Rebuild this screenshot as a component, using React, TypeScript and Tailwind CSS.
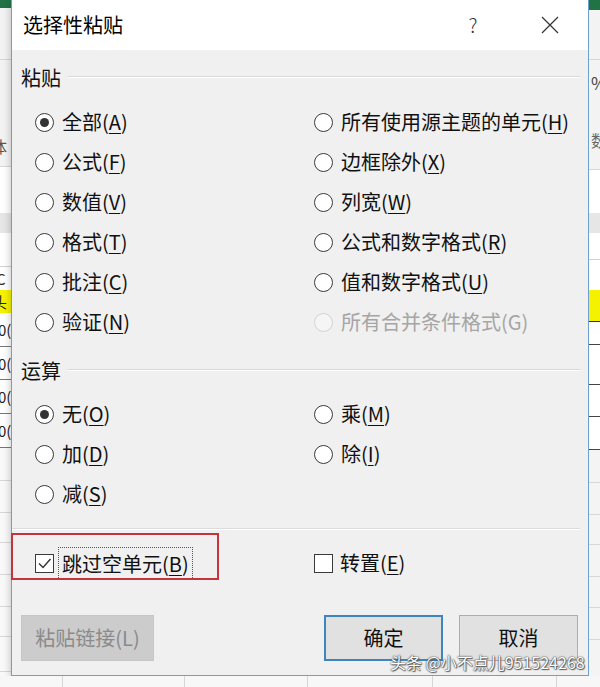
const font = "font-['Noto_Sans_CJK_SC',sans-serif]";

const pasteOptions = [
  { text: '全部', k: 'A', checked: true },
  { text: '所有使用源主题的单元', k: 'H' },
  { text: '公式', k: 'F' },
  { text: '边框除外', k: 'X' },
  { text: '数值', k: 'V' },
  { text: '列宽', k: 'W' },
  { text: '格式', k: 'T' },
  { text: '公式和数字格式', k: 'R' },
  { text: '批注', k: 'C' },
  { text: '值和数字格式', k: 'U' },
  { text: '验证', k: 'N' },
  { text: '所有合并条件格式', k: 'G', disabled: true },
];

const opOptions = [
  { text: '无', k: 'O', checked: true },
  { text: '乘', k: 'M' },
  { text: '加', k: 'D' },
  { text: '除', k: 'I' },
  { text: '减', k: 'S' },
];

type Opt = { text: string; k: string; checked?: boolean; disabled?: boolean };

function Radio({ checked = false, disabled = false }) {
  return (
    <span
      className={`flex h-[19px] w-[19px] shrink-0 items-center justify-center rounded-full border-[1.5px] ${
        disabled ? 'border-[#d2d2d2] bg-[#f5f5f5]' : 'border-[#3a3a3a] bg-white'
      }`}
    >
      {checked && <span className="h-[9px] w-[9px] rounded-full bg-[#333333]" />}
    </span>
  );
}

function Key({ k }: { k: string }) {
  return <span className="underline decoration-1 underline-offset-[3px]">{k}</span>;
}

function Option({ text, k, checked, disabled }: Opt) {
  return (
    <div className="flex h-[40px] items-center gap-[8px]">
      <Radio checked={checked} disabled={disabled} />
      <span className={`text-[20px] leading-none ${disabled ? 'text-[#a5a5a5]' : 'text-[#111111]'}`}>
        {text}({disabled ? k : <Key k={k} />})
      </span>
    </div>
  );
}

function Section({ title }: { title: string }) {
  return (
    <div className="flex h-[28px] items-center pl-[9px] pr-[8px]">
      <span className="text-[20px] leading-none text-[#111111]">{title}</span>
      <div className="ml-[7px] mb-[2px] flex-1 border-t border-b border-t-[#d9d9d9] border-b-white" />
    </div>
  );
}

function Checkbox({ checked = false }) {
  return (
    <span className="flex h-[19px] w-[19px] shrink-0 items-center justify-center border-[1.5px] border-[#3a3a3a] bg-white">
      {checked && (
        <svg width="15" height="15" viewBox="0 0 15 15">
          <path d="M2 7.5 L6 11.5 L13.5 3" fill="none" stroke="#333" strokeWidth="1.4" />
        </svg>
      )}
    </span>
  );
}

function LeftStrip() {
  return (
    <div className={`flex w-[11px] shrink-0 flex-col overflow-hidden ${font}`}>
      <div className="h-[8px] bg-[#217346]" />
      <div className="h-[52px] border-b border-[#d6d6d6] bg-[#f3f3f3]" />
      <div className="flex h-[107px] items-end border-b border-[#d6d6d6] bg-[#f3f3f3] pb-[12px]">
        <span className="ml-[-9px] text-[16px] leading-none text-[#555555]">体</span>
      </div>
      <div className="h-[46px] bg-white" />
      <div className="h-[20px] bg-[#e6e6e6]" />
      <div className="h-[34px] border-b border-[#d0d0d0] bg-white" />
      <div className="flex h-[23px] items-center bg-white">
        <span className="ml-[-4px] text-[15px] leading-none text-[#333333]">C</span>
      </div>
      <div className="flex h-[23px] items-center bg-[#f5f200]">
        <span className="ml-[-8px] text-[15px] leading-none text-[#222222]">头</span>
      </div>
      <div className="flex h-[34px] items-center border-b border-[#777777] bg-white">
        <span className="ml-[-2px] text-[15px] leading-none text-[#222222]">0(</span>
      </div>
      <div className="flex h-[33px] items-center border-b border-[#777777] bg-white">
        <span className="ml-[-2px] text-[15px] leading-none text-[#222222]">0(</span>
      </div>
      <div className="flex h-[34px] items-center border-b border-[#777777] bg-white">
        <span className="ml-[-2px] text-[15px] leading-none text-[#222222]">0(</span>
      </div>
      <div className="flex h-[34px] items-center border-b border-[#777777] bg-white">
        <span className="ml-[-2px] text-[15px] leading-none text-[#222222]">0(</span>
      </div>
      <div className="h-[33px] border-b border-[#d8d8d8] bg-[#f9f9f9]" />
      <div className="h-[32px] border-b border-[#d8d8d8] bg-[#f9f9f9]" />
      <div className="h-[30px] border-b border-[#d8d8d8] bg-[#f9f9f9]" />
      <div className="h-[32px] border-b border-[#d8d8d8] bg-[#f9f9f9]" />
      <div className="h-[32px] border-b border-[#d8d8d8] bg-[#f9f9f9]" />
      <div className="h-[30px] border-b border-[#d8d8d8] bg-[#f9f9f9]" />
      <div className="h-[35px] border-b border-[#d8d8d8] bg-[#f9f9f9]" />
      <div className="flex-1 bg-[#f9f9f9]" />
    </div>
  );
}

function RightStrip() {
  return (
    <div className={`flex w-[11px] shrink-0 flex-col overflow-hidden ${font}`}>
      <div className="h-[10px] bg-[#217346]" />
      <div className="h-[50px] border-b border-[#d6d6d6] bg-[#f3f3f3]" />
      <div className="flex h-[110px] flex-col border-b border-[#d6d6d6] bg-[#f3f3f3] pl-[2px] pt-[14px]">
        <span className="text-[17px] leading-none text-[#444444]">%</span>
        <span className="mt-[41px] text-[16px] leading-none text-[#666666]">数</span>
      </div>
      <div className="h-[43px] bg-white" />
      <div className="h-[20px] bg-[#e6e6e6]" />
      <div className="h-[27px] border-b border-[#d0d0d0] bg-white" />
      <div className="h-[30px] bg-white" />
      <div className="h-[32px] border-b border-[#333333] bg-[#f5f200]" />
      <div className="h-[23px] border-b border-[#444444] bg-white" />
      <div className="h-[40px] border-b border-[#444444] bg-white" />
      <div className="h-[32px] border-b border-[#444444] bg-white" />
      <div className="h-[33px] border-b border-[#444444] bg-white" />
      <div className="h-[33px] border-b border-[#d8d8d8] bg-[#f4f4f4]" />
      <div className="h-[32px] border-b border-[#d8d8d8] bg-[#f4f4f4]" />
      <div className="h-[30px] border-b border-[#d8d8d8] bg-[#f4f4f4]" />
      <div className="h-[32px] border-b border-[#d8d8d8] bg-[#f4f4f4]" />
      <div className="h-[31px] border-b border-[#d8d8d8] bg-[#f4f4f4]" />
      <div className="h-[32px] border-b border-[#d8d8d8] bg-[#f4f4f4]" />
      <div className="flex-1 bg-[#f4f4f4]" />
    </div>
  );
}

function BottomStrip() {
  return (
    <div className="flex h-[11px] bg-[#f7f7f7]">
      <div className="w-[63px] border-r border-[#d6d6d6]" />
      <div className="w-[122px] border-r border-[#d6d6d6]" />
      <div className="w-[123px] border-r border-[#d6d6d6]" />
      <div className="w-[125px] border-r border-[#d6d6d6]" />
      <div className="w-[124px] border-r border-[#d6d6d6]" />
      <div className="flex-1" />
    </div>
  );
}

function Dialog() {
  return (
    <div className="flex h-[676px] w-[578px] shrink-0 flex-col border-x border-b border-[#6f9fcc] bg-[#f0f0f0] shadow-[0_2px_8px_rgba(0,0,0,0.25)]">
      {/* title bar */}
      <div className="flex h-[50px] shrink-0 items-center bg-white pl-[11px] pr-[15px]">
        <span className="text-[20px] leading-none text-black">选择性粘贴</span>
        <span className="ml-auto flex w-[46px] justify-center text-[20px] font-light leading-none text-[#333333]">?</span>
        <span className="ml-[31px] flex w-[46px] items-center justify-center">
          <svg width="18" height="18" viewBox="0 0 18 18">
            <path d="M1 1 L17 17 M17 1 L1 17" stroke="#333" strokeWidth="1.2" fill="none" />
          </svg>
        </span>
      </div>

      <div className="flex flex-1 flex-col pt-[14px]">
        <Section title="粘贴" />
        <div className="mt-[10px] grid grid-cols-[279px_1fr] pl-[23px]">
          {pasteOptions.map((o) => (
            <Option key={o.k} {...o} />
          ))}
        </div>

        <div className="mt-[15px]">
          <Section title="运算" />
        </div>
        <div className="mt-[9px] grid grid-cols-[279px_1fr] pl-[23px]">
          {opOptions.map((o) => (
            <Option key={o.k} {...o} />
          ))}
        </div>

        <div className="mt-[14px] mr-[8px] border-t border-b border-t-[#dcdcdc] border-b-white" />

        <div className="relative mt-[13px] grid h-[40px] grid-cols-[279px_1fr] pl-[23px]">
          <div className="flex items-center gap-[5px]">
            <Checkbox checked />
            <span className="px-[3px] py-[3px] text-[20px] leading-[25px] text-[#111111] outline outline-1 outline-dotted outline-[#555555]">
              跳过空单元(<Key k="B" />)
            </span>
          </div>
          <div className="flex items-center gap-[4px]">
            <Checkbox />
            <span className="px-[3px] text-[20px] leading-none text-[#111111]">
              转置(<Key k="E" />)
            </span>
          </div>
          <div className="pointer-events-none absolute left-[-1px] top-[-10px] h-[47px] w-[208px] border-2 border-[#c8323a]" />
        </div>

        <div className="mt-[32px] flex h-[46px] pl-[9px] pr-[10px]">
          <div className="flex w-[133px] items-center justify-center border border-[#c6c6c6] bg-[#cccccc] text-[20px] leading-none text-[#8a8a8a]">
            粘贴链接(L)
          </div>
          <div className="ml-auto flex w-[119px] items-center justify-center border-2 border-[#3f84bf] bg-[#e1e1e1] text-[20px] leading-none text-[#111111]">
            确定
          </div>
          <div className="ml-[16px] flex w-[119px] items-center justify-center border border-[#adadad] bg-[#e1e1e1] text-[20px] leading-none text-[#111111]">
            取消
          </div>
        </div>
      </div>
    </div>
  );
}

export default function App() {
  return (
    <div className={`relative flex h-[687px] w-[600px] flex-col overflow-hidden bg-white ${font}`}>
      <div className="flex h-[676px]">
        <LeftStrip />
        <Dialog />
        <RightStrip />
      </div>
      <BottomStrip />
      <span className="pointer-events-none absolute left-[390px] top-[654px] text-[16px] leading-none text-white [text-shadow:0_0_1px_#333,0_0_2px_#555,1px_1px_1px_#666]">
        头条 @小不点儿951524268
      </span>
    </div>
  );
}
